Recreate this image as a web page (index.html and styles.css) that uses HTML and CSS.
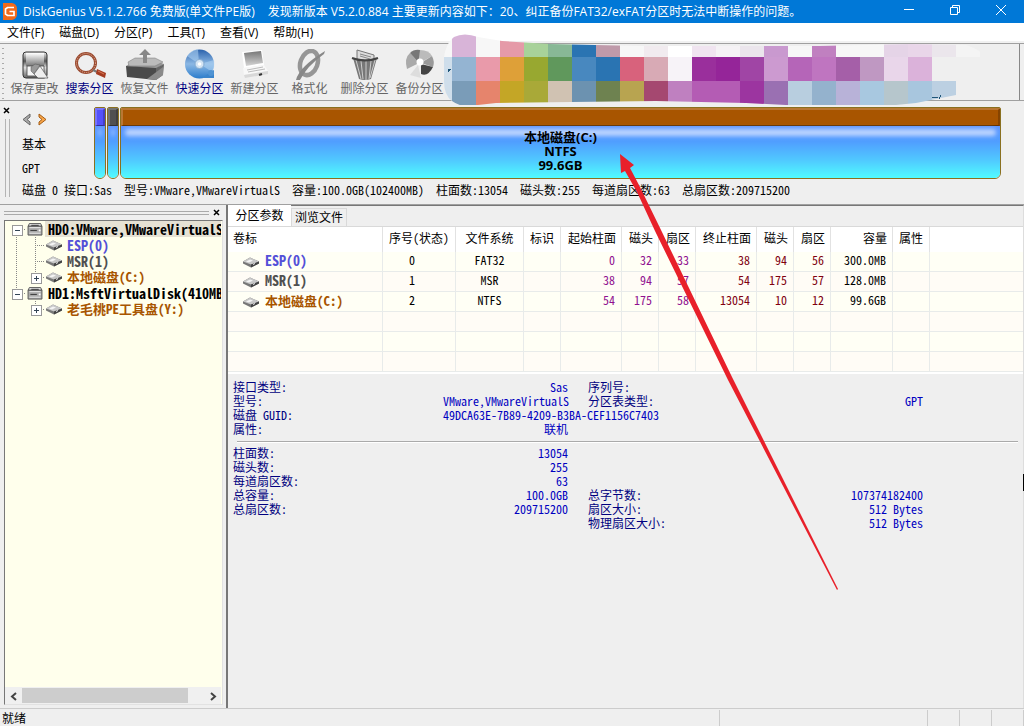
FILE: index.html
```html
<!DOCTYPE html>
<html lang="zh-CN">
<head>
<meta charset="utf-8">
<title>DiskGenius</title>
<link rel="stylesheet" href="styles.css">
</head>
<body>
<svg class="defs" width="0" height="0" aria-hidden="true">
  <defs>
    <linearGradient id="metal" x1="0" y1="0" x2="0" y2="1"><stop offset="0" stop-color="#eee"/><stop offset=".35" stop-color="#555"/><stop offset=".6" stop-color="#ddd"/><stop offset="1" stop-color="#666"/></linearGradient>
    <linearGradient id="shine" x1="0" y1="0" x2="0" y2="1"><stop offset="0" stop-color="#fff"/><stop offset="1" stop-color="#777"/></linearGradient>
    <linearGradient id="grey" x1="0" y1="0" x2="0" y2="1"><stop offset="0" stop-color="#777"/><stop offset="1" stop-color="#d4d4d4"/></linearGradient>
    <linearGradient id="blue" x1="0" y1="0" x2="0" y2="1"><stop offset="0" stop-color="#2b62ac"/><stop offset=".5" stop-color="#8cb8e4"/><stop offset="1" stop-color="#2a7ccc"/></linearGradient>
    <symbol id="hd" viewBox="0 0 16 14"><path d="M2 .5h12l1.500 3H.5z" fill="#ddd" stroke="#555"/><path d="M.5 3.500h15v9.500H.5z" fill="#aaa" stroke="#555"/><path d="M2 5h12M2 11h12" stroke="#eee"/><path d="M3 8h7M4 2.500h8" stroke="#333"/><path d="M12 7h2v2h-2z" fill="#fff"/></symbol>
    <symbol id="vol" viewBox="0 0 16 12"><path d="M0 5l7-4 9 4v2l-8 4-8-4z" fill="#777"/><path d="M0 5l7-4 9 4-8 3z" fill="#c8c8c8"/><path d="M3 5l4-2 3 1-4 2z" fill="#f4f4f4"/><path d="M8 8l8-3v2l-8 4z" fill="#444"/><path d="M10 8l2-1" stroke="#eee"/></symbol>
  </defs>
</svg>
<div class="app">
  <header class="titlebar">
    <svg class="logo" viewBox="0 0 16 17"><path d="M1 0h9q5 1 5 6v5q0 5-5 6H1z" fill="#f26a1b"/><path d="M12 4.500H5.500L3.500 6v5l2 1.500H12V8.500H7.500" fill="none" stroke="#fff" stroke-width="1.700"/></svg>
    <h1 class="caption">DiskGenius V5.1.2.766 免费版(单文件PE版)<span class="news">发现新版本 V5.2.0.884 主要更新内容如下：20、纠正备份FAT32/exFAT分区时无法中断操作的问题。</span></h1>
    <button class="winbtn" aria-label="最小化"><svg viewBox="0 0 12 12"><path d="M1 5.500h10"/></svg></button>
    <button class="winbtn" aria-label="还原"><svg viewBox="0 0 12 12"><path d="M1.500 3.500h7v7h-7zM3.500 3V1.500h7v7H9"/></svg></button>
    <button class="winbtn" aria-label="关闭"><svg viewBox="0 0 12 12"><path d="M1 1l10 10M11 1L1 11"/></svg></button>
  </header>
  <nav class="menubar">
    <button>文件(F)</button><button>磁盘(D)</button><button>分区(P)</button><button>工具(T)</button><button>查看(V)</button><button>帮助(H)</button>
  </nav>
  <div class="toolbar">
    <span class="dots"></span>
    <button class="tool off"><svg viewBox="0 0 32 32"><rect x="4" y="3" width="24" height="26" rx="3" fill="url(#metal)" stroke="#333"/><path d="M7 4h18v13H7z" fill="url(#shine)"/><path d="M8 17h17v10H8z" fill="#f6f6f6" stroke="#444" stroke-width=".8"/><path d="M12 18l4-3 5 1-6 9-3-3z" fill="#999" stroke="#555" stroke-width=".5"/><path d="M21 17l8 12H19l-4-4z" fill="#eee" stroke="#555" stroke-width=".7"/></svg>保存更改</button>
    <button class="tool"><svg viewBox="0 0 32 32"><circle cx="12" cy="14" r="9.500" fill="#efefef" stroke="#9a4a30" stroke-width="3"/><circle cx="12" cy="14" r="9.500" fill="none" stroke="#e8b49a" stroke-dasharray="1 1"/><path d="M19 21l4 2" stroke="#777" stroke-width="2"/><path d="M23 20l9 4-1 5-9-4z" fill="#a53b20"/><path d="M24 22l6 3" stroke="#d77a58"/></svg>搜索分区</button>
    <button class="tool off"><svg class="wide" viewBox="0 0 40 32"><path d="M1 17l8-5h22l8 3-8 5z" fill="#999"/><path d="M3 13l7-4h20l8 4-8 4H4z" fill="#bbb" stroke="#777" stroke-width=".5"/><path d="M1 17l30 2v12L2 28z" fill="#4a4a4a"/><path d="M31 19l8-4-1 11-7 5z" fill="#666"/><path d="M22 30l16-12v8l-7 5z" fill="#8a8a8a"/><path d="M18 14V6h-4l6-6 6 6h-4v8z" fill="#888"/></svg>恢复文件</button>
    <button class="tool"><svg viewBox="0 0 32 32"><circle cx="15.500" cy="15" r="14.500" fill="url(#blue)"/><path d="M15 15L3 7q4-6 11-7zM16 15l14-4q1 9-2 12z" fill="#acd0f2" opacity=".6"/><path d="M18 29h12v-8z" fill="#3a84cb"/><circle cx="15.500" cy="15" r="4.500" fill="#d3e4f4" stroke="#85abd0"/><circle cx="15.500" cy="15" r="1.800" fill="#fff"/><circle cx="27" cy="24" r="3" fill="#4f93d3"/></svg>快速分区</button>
    <button class="tool off"><svg viewBox="0 0 32 32"><path d="M3 3l20-2 2 15-20 3z" fill="#fff"/><path d="M5 4l17-2 2 12-17 3z" fill="url(#grey)"/><path d="M4 19l21-3 4 6-24 4z" fill="#f8f8f8"/><path d="M5 26l24-4v3L6 29z" fill="#d8d8d8"/><path d="M8 21l16-3M9 23l17-3" stroke="#bbb"/><path d="M20 26l3-1" stroke="#333" stroke-width="2"/></svg>新建分区</button>
    <button class="tool off"><svg viewBox="0 0 32 32"><ellipse cx="15" cy="14" rx="8.500" ry="12.500" transform="rotate(20 15 14)" fill="none" stroke="#969696" stroke-width="4.500"/><path d="M2 31Q5 18 31 2l-1 3Q13 17 6 31z" fill="#888"/></svg>格式化</button>
    <button class="tool off"><svg viewBox="0 0 32 32"><path d="M8 10V1l17 5v6z" fill="#ddd" stroke="#777"/><path d="M11 5l11 3M11 7l10 3" stroke="#888"/><path d="M4 9q12 4 24 0l-6 21q-6 2-12 0z" fill="#777"/><path d="M7 11l5 19M12 12l2 18M17 12v19M22 12l-2 18M26 11l-5 18" stroke="#ccc"/><path d="M3 9q13 5 26 0" fill="none" stroke="#444" stroke-width="2"/></svg>删除分区</button>
    <button class="tool off"><svg viewBox="0 0 32 32"><path d="M15 14L3 20Q0 9 6 4z" fill="#aaa"/><path d="M15 14L6 4q4-4 10-3z" fill="#777"/><path d="M16 14V1q9 0 12 6z" fill="#bbb"/><path d="M17 14l11-7q3 6 1 11z" fill="#999"/><path d="M17 15l12 3q-5 10-12 7z" fill="#444"/><path d="M14 16l3 13-11-3z" fill="#ddd"/><circle cx="16" cy="13" r="3.500" fill="#fff"/></svg>备份分区</button>
    <svg class="mosaic" viewBox="0 0 546 72" shape-rendering="crispEdges">
      <defs><clipPath id="cloud"><path d="M0 24Q2 10 10 4q10-5 24 0l24 4 48 3 90 2h180l90-2 56 1q16 5 22 15l-8 26-24 9-40 8-30 3h-80l-60-3-90-2-160 2-18 2q-15 4-26-4-8-6-8-20z"/></clipPath></defs>
      <g clip-path="url(#cloud)">
        <path d="M0 0h8v24H0z" fill="#f7f7f7"/><path d="M0 24h8v48H0z" fill="#cfdeeb"/>
        <g fill="none" stroke-width="24">
          <path d="M8 12h24" stroke="#d8b4d8"/><path d="M32 12h24" stroke="#f7f7f7"/><path d="M56 12h24" stroke="#e59aa8"/><path d="M80 12h24" stroke="#a8d29a"/><path d="M104 12h24" stroke="#88b896"/><path d="M128 12h24" stroke="#2a74b2"/><path d="M152 12h24" stroke="#bf9aaa"/><path d="M176 12h24" stroke="#f7f7f7"/><path d="M200 12h24" stroke="#f1ebef"/><path d="M224 12h24" stroke="#fff"/><path d="M248 12h24" stroke="#f0e4f0"/><path d="M272 12h24" stroke="#f5f2f5"/><path d="M296 12h24" stroke="#ebe5ec"/><path d="M320 12h24" stroke="#c999cf"/><path d="M344 12h24" stroke="#f7f7f7"/><path d="M368 12h24" stroke="#c080c0"/><path d="M392 12h48" stroke="#f7f7f7"/><path d="M440 12h24" stroke="#e5d4e7"/><path d="M464 12h24" stroke="#e9d6e9"/><path d="M488 12h24" stroke="#ebe6ec"/><path d="M512 12h24" stroke="#f4f4f4"/>
          <path d="M8 36h24" stroke="#94b4d2"/><path d="M32 36h24" stroke="#e99aaa"/><path d="M56 36h24" stroke="#dea038"/><path d="M80 36h24" stroke="#98a830"/><path d="M104 36h24" stroke="#60985c"/><path d="M128 36h24" stroke="#4888bf"/><path d="M152 36h24" stroke="#2a74b2"/><path d="M176 36h24" stroke="#d8627c"/><path d="M200 36h24" stroke="#d8aab5"/><path d="M224 36h24" stroke="#f7f3f8"/><path d="M248 36h24" stroke="#9a2f9c"/><path d="M272 36h24" stroke="#952599"/><path d="M296 36h24" stroke="#a045a5"/><path d="M320 36h24" stroke="#cc9ad0"/><path d="M344 36h24" stroke="#b565b8"/><path d="M368 36h24" stroke="#bf75c0"/><path d="M392 36h24" stroke="#a55fa8"/><path d="M416 36h24" stroke="#bf98c2"/><path d="M440 36h24" stroke="#e9d6ea"/><path d="M464 36h24" stroke="#dbb2da"/><path d="M488 36h48" stroke="#efefef"/>
          <path d="M8 60h24" stroke="#7a9cb8"/><path d="M32 60h24" stroke="#e6846c"/><path d="M56 60h24" stroke="#c4a626"/><path d="M80 60h24" stroke="#a9a938"/><path d="M104 60h24" stroke="#d0c2b2"/><path d="M128 60h24" stroke="#6c92b0"/><path d="M152 60h24" stroke="#6e8250"/><path d="M176 60h24" stroke="#b8a450"/><path d="M200 60h24" stroke="#a54870"/><path d="M224 60h24" stroke="#bf80c0"/><path d="M248 60h48" stroke="#b45cb4"/><path d="M296 60h24" stroke="#9c35a0"/><path d="M320 60h24" stroke="#9a70b2"/><path d="M344 60h24" stroke="#b8cedf"/><path d="M368 60h24" stroke="#94b2cd"/><path d="M392 60h24" stroke="#b8b2d8"/><path d="M416 60h24" stroke="#a8c8e0"/><path d="M440 60h24" stroke="#b6c6cc"/><path d="M464 60h24" stroke="#a8c6de"/><path d="M488 60h24" stroke="#bcd0e2"/>
        </g>
      </g>
      <path d="M4 36h3l-3 3zM488 64h6M497 62l-2 4" fill="#1f5578" stroke="#1f5578"/>
    </svg>
  </div>

  <section class="diskpanel">
    <div class="sidegrip"><button class="close" aria-label="关闭面板"><svg viewBox="0 0 7 7"><path d="M1 1l5 5M6 1L1 6"/></svg></button><span class="rails"></span></div>
    <div class="diskmeta">
      <div class="arrows"><button aria-label="上一个磁盘"><svg viewBox="0 0 10 13"><path d="M8 1L1 6.500 8 12V9L5 6.500 8 4z" fill="#aaa" stroke="#666"/></svg></button><button aria-label="下一个磁盘"><svg viewBox="0 0 10 13"><path d="M2 1l7 5.500L2 12V9l3-2.500L2 4z" fill="#f9a548" stroke="#a35d16"/></svg></button></div>
      <span>基本</span><span>GPT</span>
    </div>
    <div class="parts">
      <div class="part esp"><i class="cap"></i><div class="fill"></div></div>
      <div class="part msr"><i class="cap"></i><div class="fill"></div></div>
      <div class="part main"><i class="cap"></i><div class="fill"><span>本地磁盘(C:)</span><span>NTFS</span><span>99.6GB</span></div></div>
    </div>
    <div class="summary"><span>磁盘 0 接口:Sas</span><span>型号:VMware,VMwareVirtualS</span><span>容量:100.0GB(102400MB)</span><span>柱面数:13054</span><span>磁头数:255</span><span>每道扇区数:63</span><span>总扇区数:209715200</span></div>
  </section>

  <main class="work">
    <aside class="side">
      <div class="sidehead"><span class="hrails"></span><button class="close" aria-label="关闭磁盘列表"><svg viewBox="0 0 7 7"><path d="M1 1l5 5M6 1L1 6"/></svg></button></div>
      <div class="treebox">
        <ul class="tree">
          <li><button class="cell open root" aria-label="折叠"></button><svg class="ico"><use href="#hd"/></svg><span class="name latin sel">HD0:VMware,VMwareVirtualS</span></li>
          <li><i class="cell down"></i><i class="cell down across"></i><svg class="ico"><use href="#vol"/></svg><span class="name latin c-esp">ESP(0)</span></li>
          <li><i class="cell down"></i><i class="cell down across"></i><svg class="ico"><use href="#vol"/></svg><span class="name latin c-msr">MSR(1)</span></li>
          <li><i class="cell down"></i><button class="cell shut" aria-label="展开"></button><svg class="ico"><use href="#vol"/></svg><span class="name c-vol">本地磁盘(C:)</span></li>
          <li><button class="cell open" aria-label="折叠"></button><svg class="ico"><use href="#hd"/></svg><span class="name latin">HD1:MsftVirtualDisk(410MB</span></li>
          <li><i class="cell"></i><button class="cell shut" aria-label="展开"></button><svg class="ico"><use href="#vol"/></svg><span class="name c-vol">老毛桃PE工具盘(Y:)</span></li>
        </ul>
        <div class="hscroll"><button aria-label="向左滚动"><svg viewBox="0 0 8 9"><path d="M6 1L2 4.500 6 8"/></svg></button><span class="track"><i class="thumb"></i></span><button aria-label="向右滚动"><svg viewBox="0 0 8 9"><path d="M2 1l4 3.500L2 8"/></svg></button></div>
      </div>
    </aside>
    <section class="detail">
      <div class="tabs"><button class="tab on">分区参数</button><button class="tab">浏览文件</button></div>
      <table class="grid">
        <colgroup><col class="w155"><col class="w73"><col class="w68"><col class="w37"><col class="w61"><col class="w37"><col class="w37"><col class="w61"><col class="w37"><col class="w37"><col class="w62"><col class="w37"><col></colgroup>
        <thead><tr><th class="l">卷标</th><th class="c">序号(状态)</th><th class="c">文件系统</th><th class="c">标识</th><th>起始柱面</th><th>磁头</th><th>扇区</th><th>终止柱面</th><th>磁头</th><th>扇区</th><th>容量</th><th class="c">属性</th><th></th></tr></thead>
        <tbody>
          <tr><td class="vol latin c-esp"><svg class="ico"><use href="#vol"/></svg>ESP(0)</td><td class="c num">0</td><td class="c">FAT32</td><td></td><td class="st">0</td><td class="st">32</td><td class="st">33</td><td class="en">38</td><td class="en">94</td><td class="en">56</td><td>300.0MB</td><td></td><td></td></tr>
          <tr><td class="vol latin c-msr"><svg class="ico"><use href="#vol"/></svg>MSR(1)</td><td class="c num">1</td><td class="c">MSR</td><td></td><td class="st">38</td><td class="st">94</td><td class="st">57</td><td class="en">54</td><td class="en">175</td><td class="en">57</td><td>128.0MB</td><td></td><td></td></tr>
          <tr><td class="vol c-vol"><svg class="ico"><use href="#vol"/></svg>本地磁盘(C:)</td><td class="c num">2</td><td class="c">NTFS</td><td></td><td class="st">54</td><td class="st">175</td><td class="st">58</td><td class="en">13054</td><td class="en">10</td><td class="en">12</td><td>99.6GB</td><td></td><td></td></tr>
          <tr><td></td><td></td><td></td><td></td><td></td><td></td><td></td><td></td><td></td><td></td><td></td><td></td><td></td></tr>
          <tr><td></td><td></td><td></td><td></td><td></td><td></td><td></td><td></td><td></td><td></td><td></td><td></td><td></td></tr>
          <tr><td></td><td></td><td></td><td></td><td></td><td></td><td></td><td></td><td></td><td></td><td></td><td></td><td></td></tr>
        </tbody>
      </table>
      <div class="info">
        <dl>
          <dt>接口类型:</dt><dd>Sas</dd><dt>序列号:</dt><dd></dd>
          <dt>型号:</dt><dd>VMware,VMwareVirtualS</dd><dt>分区表类型:</dt><dd>GPT</dd>
          <dt>磁盘 GUID:</dt><dd class="long">49DCA63E-7B89-4209-B3BA-CEF1156C7403</dd><dt></dt><dd></dd>
          <dt>属性:</dt><dd>联机</dd><dt></dt><dd></dd>
        </dl>
        <hr>
        <dl>
          <dt>柱面数:</dt><dd>13054</dd><dt></dt><dd></dd>
          <dt>磁头数:</dt><dd>255</dd><dt></dt><dd></dd>
          <dt>每道扇区数:</dt><dd>63</dd><dt></dt><dd></dd>
          <dt>总容量:</dt><dd>100.0GB</dd><dt>总字节数:</dt><dd>107374182400</dd>
          <dt>总扇区数:</dt><dd>209715200</dd><dt>扇区大小:</dt><dd>512 Bytes</dd>
          <dt></dt><dd></dd><dt>物理扇区大小:</dt><dd>512 Bytes</dd>
        </dl>
      </div>
    </section>
  </main>
  <footer class="status"><span class="msg">就绪</span><span class="s1"></span><span class="s2"></span><span class="s2"></span><span class="s2"></span></footer>
  <svg class="pointer" viewBox="0 0 218 437" aria-hidden="true"><path d="M0 0l14 11-4 3 10 19 21 43 71 147 106 212-1 1L108 226 35 77 17 38 5 17l-4 2z" fill="#e8202a"/></svg>
  <i class="caret"></i>
</div>
</body>
</html>
```
FILE: styles.css
```css
* { box-sizing: border-box; }
body { margin: 0; }
button { border: 0; background: none; padding: 0; margin: 0; font: inherit; color: inherit; }
.defs { position: absolute; }
.app {
  position: relative;
  display: flex;
  flex-direction: column;
  height: 100vh;
  overflow: hidden;
  background: #efefef;
  color: #000;
  font: 12px/14px "Noto Sans CJK SC", sans-serif;
  font-feature-settings: "hwid";
}

/* title and menu */
.titlebar { display: flex; align-items: center; height: 23px; padding-left: 2px; background: #0078d7; color: #fff; flex: none; }
.logo { width: 16px; height: 17px; flex: none; }
.caption { flex: 1; margin: 0; padding-left: 5px; font: 12px/20px "Open Sans", "Noto Sans CJK SC", sans-serif; font-feature-settings: normal; white-space: nowrap; overflow: hidden; }
.news { margin-left: 13px; }
.winbtn { width: 46px; height: 20px; flex: none; display: flex; justify-content: center; align-items: center; align-self: flex-start; }
.winbtn svg { width: 12px; height: 12px; fill: none; stroke: #fff; }
.menubar { display: flex; gap: 15px; height: 20px; padding: 0 7px; background: linear-gradient(#fff 18px, #f1f1f1 18px); font: 12px/20px "Open Sans", "Noto Sans CJK SC", sans-serif; font-feature-settings: normal; flex: none; }

/* toolbar */
.toolbar { position: relative; display: flex; height: 58px; border: solid #a0a0a0; border-width: 1px 0; flex: none; }
.toolbar::after { content: ""; margin-left: auto; margin-right: 4px; border-left: 1px solid #888; }
.dots { width: 7px; background: radial-gradient(circle, #aaa 1px, transparent 1px) 1px 2px / 4px 5px repeat-y; }
.tool { display: flex; flex-direction: column; align-items: center; width: 55px; padding-top: 5px; color: #000080; white-space: nowrap; line-height: 14px; }
.tool svg { width: 32px; height: 32px; flex: none; }
.tool .wide { width: 40px; }
.tool.off { color: #666; }
.mosaic { position: absolute; left: 444px; top: -11px; width: 546px; height: 72px; }

/* disk map */
.diskpanel { display: grid; grid-template-columns: 22px 72px 1fr; grid-template-rows: 72px auto; padding: 6px 23px 7px 0; border-bottom: 1px solid #a0a0a0; flex: none; }
.sidegrip { grid-row: 1 / 3; display: flex; flex-direction: column; padding-left: 3px; gap: 4px; }
.close { width: 8px; height: 8px; display: flex; }
.close svg { width: 7px; height: 7px; stroke: #000; stroke-width: 1.5; }
.rails { width: 5px; flex: 1; margin-left: 2px; border: solid #b4b4b4; border-width: 0 1px; }
.diskmeta { display: flex; flex-direction: column; gap: 10px; padding-top: 6px; }
.arrows { display: flex; gap: 5px; height: 14px; }
.arrows svg { width: 10px; height: 13px; }
.parts { display: flex; gap: 1px; }
.part { display: flex; flex-direction: column; width: 12px; border: 1px solid #8a7020; border-radius: 2px 2px 6px 6px; overflow: hidden; }
.main { flex: 1; }
.cap { height: 18px; border: solid; border-width: 2px 2px 1px; border-color: #ffffff33 #00000033 #00000066 #ffffff33; }
.esp .cap { background-color: #5450fa; }
.msr .cap { background-color: #505050; }
.main .cap { background-color: #a85500; }
.fill { position: relative; flex: 1; display: flex; flex-direction: column; align-items: center; padding-top: 4px; background: linear-gradient(#6096ff, #509eff 30%, #50c8ff 65%, #50fcff); font: bold 13px/14px "Open Sans", "Noto Sans CJK SC", sans-serif; font-feature-settings: normal; }
.fill::before { content: ""; position: absolute; inset: 3px 4px auto; height: 7px; background: #bcd4ff; border-radius: 4px; filter: blur(2px); }
.fill span { position: relative; }
.summary { grid-column: 2 / 4; display: flex; gap: 12px; padding-top: 4px; white-space: nowrap; }

/* tree */
.work { flex: 1; min-height: 0; display: flex; }
.side { width: 226px; flex: none; display: flex; flex-direction: column; padding: 0 3px 3px 4px; }
.sidehead { display: flex; align-items: center; gap: 4px; height: 15px; padding-right: 2px; }
.hrails { flex: 1; height: 4px; border: solid #aaa; border-width: 1px 0; }
.treebox { flex: 1; display: flex; flex-direction: column; border: 1px solid #e2e2e2; border-top-color: #777; border-left-color: #777; background: #ffffec; padding-right: 1px; }
.tree { flex: 1; list-style: none; margin: 0; padding: 0 0 0 2px; overflow: hidden; font-size: 13px; font-weight: bold; }
.tree li { display: flex; align-items: center; height: 16px; }
.cell { position: relative; width: 19px; height: 16px; flex: none; }
.down { background: repeating-linear-gradient(#888 0 1px, transparent 1px 2px) 9px 0 / 1px 16px no-repeat; }
.across::after, .open::after, .shut::after { content: ""; position: absolute; left: 9px; right: 0; top: 8px; height: 1px; background: repeating-linear-gradient(90deg, #888 0 1px, transparent 1px 2px); }
.open, .shut { background: repeating-linear-gradient(#888 0 1px, transparent 1px 2px) 9px 0 / 1px 8px no-repeat; }
.root { background-position: 9px 8px; }
.open::before, .shut::before { content: ""; position: absolute; z-index: 1; left: 5px; top: 4px; width: 9px; height: 9px; border: 1px solid #999; background: linear-gradient(#345, #345) center / 5px 1px no-repeat, #fff; }
.shut::before { background: linear-gradient(#345, #345) center / 5px 1px no-repeat, linear-gradient(#345, #345) center / 1px 5px no-repeat, #fff; }
.ico { width: 16px; height: 13px; flex: none; }
.tree .ico { margin-left: 1px; }
.name { padding-left: 5px; white-space: nowrap; line-height: 14px; }
.latin { font-size: 14px; }
.sel { flex: 1; background: #e6e2d4; margin-left: 2px; padding-left: 3px; line-height: 16px; }
.c-esp { color: #5450d8; }
.c-msr { color: #505050; }
.c-vol { color: #a85500; }
.hscroll { display: flex; height: 17px; background: #f0f0f0; }
.hscroll button { width: 17px; }
.hscroll svg { width: 8px; height: 9px; fill: none; stroke: #444; stroke-width: 2; }
.track { flex: 1; display: flex; padding: 1px 0; }
.thumb { width: 91%; background: #cdcdcd; }

/* detail pane */
.detail { flex: 1; min-width: 0; border-left: 2px solid #777; border-top: 1px solid #777; border-right: 1px solid #ddd; }
.tabs { display: flex; align-items: flex-end; height: 21px; border-bottom: 1px solid #d9d9d9; }
.tab { width: 56px; height: 18px; padding-bottom: 1px; border: 1px solid #d9d9d9; border-bottom: 0; }
.on { width: 63px; height: 21px; padding-bottom: 3px; background: #fff; border-color: #fff; }
.grid { width: 100%; table-layout: fixed; border-collapse: separate; border-spacing: 0; border-bottom: 2px solid #fff; }
.grid th { height: 25px; padding: 0 5px 3px; font-weight: normal; text-align: right; white-space: nowrap; background: #fff; border-right: 1px solid #e2e2e2; }
.grid td { height: 20px; padding: 0 6px 3px; text-align: right; background: #fffff5; border: solid #e8ebea; border-width: 0 1px 1px 0; }
.grid tr:nth-child(even) td { background: #fffcf6; }
.grid th:last-child, .grid td:last-child { border-right: 0; }
.grid .c { text-align: center; padding: 0 0 3px; }
.grid .num { padding-right: 14px; }
.grid .l { text-align: left; }
.grid .vol { font-size: 13px; font-weight: bold; text-align: left; padding: 0 0 1px 15px; }
.grid .vol.latin { font-size: 14px; }
.grid .ico { vertical-align: -3px; margin-right: 6px; }
.st { color: #901090; }
.en { color: #800010; }
.w155 { width: 155px; }
.w73 { width: 73px; }
.w68 { width: 68px; }
.w37 { width: 37px; }
.w61 { width: 61px; }
.w62 { width: 62px; }
.info { padding: 6px 5px; color: #000080; }
.info dl { display: grid; grid-template-columns: minmax(0, 210fr) minmax(0, 125fr) minmax(0, 145fr) minmax(0, 210fr); grid-auto-rows: 14px; margin: 0 95px 0 0; }
.info dt { white-space: nowrap; }
.info dt:nth-of-type(even) { padding-left: 20px; }
.info dd { margin: 0; text-align: right; white-space: nowrap; color: #0000c0; }
.info .long { text-align: left; }
.info hr { margin: 5px 0 3px 4px; border: solid; border-width: 1px 0; border-color: #aaa #fff #fff; }

/* status bar */
.status { display: flex; height: 18px; border-top: 1px solid #ccc; line-height: 16px; flex: none; }
.status span { border-right: 1px solid #ccc; margin-top: 1px; }
.msg { flex: 1; padding-left: 2px; }
.s1 { width: 208px; }
.s2 { width: 32px; }

/* annotation over the window */
.pointer { position: absolute; left: 620px; top: 154px; width: 218px; height: 437px; pointer-events: none; }
.caret { position: absolute; right: 0; top: 474px; width: 1px; height: 17px; background: #000; }
```
